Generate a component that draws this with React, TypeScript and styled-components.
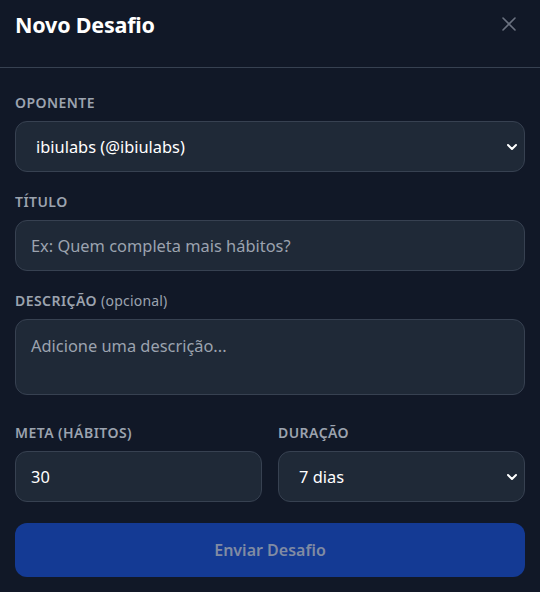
import React from "react";
import styled, { createGlobalStyle } from "styled-components";

const Global = createGlobalStyle`
  html, body { margin: 0; padding: 0; background: #111827; }
  body { font-family: "Noto Sans", "Open Sans", sans-serif; color: #f9fafb; }
  * { box-sizing: border-box; }
`;

const Modal = styled.div`
  width: 540px;
  height: 592px;
  background: #111827;
  display: flex;
  flex-direction: column;
`;

const Header = styled.div`
  height: 68px;
  padding: 0 15px 19px 15px;
  display: flex;
  align-items: center;
  justify-content: space-between;
  border-bottom: 1px solid #374151;
`;

const Title = styled.h2`
  margin: 0;
  font-size: 21.5px;
  font-weight: 700;
  color: #ffffff;
  letter-spacing: -0.2px;
`;

const CloseBtn = styled.button`
  background: none;
  border: none;
  padding: 0;
  margin-right: 6px;
  width: 20px;
  height: 20px;
  display: flex;
  align-items: center;
  justify-content: center;
  color: #6b7280;
  cursor: pointer;
`;

const Body = styled.div`
  padding: 25px 15px 0 15px;
  display: flex;
  flex-direction: column;
  gap: 20px;
`;

const Field = styled.div<{ $extra?: number }>`
  display: flex;
  flex-direction: column;
  gap: 8px;
  min-width: 0;
  margin-bottom: ${(p) => p.$extra ?? 0}px;
`;

const Label = styled.label`
  font-size: 14px;
  font-weight: 600;
  color: #9ca3af;
  line-height: 20px;
  letter-spacing: 0.45px;
  text-transform: uppercase;
`;

const Optional = styled.span`
  font-size: 14px;
  font-weight: 400;
  letter-spacing: 0.2px;
  text-transform: none;
`;

const controlBase = `
  display: block;
  width: 100%;
  background: #1f2937;
  border: 1px solid #374151;
  border-radius: 12px;
  color: #ffffff;
  font-family: "Noto Sans", "Open Sans", sans-serif;
  font-size: 16.4px;
  padding: 0 15px;
  outline: none;
  &::placeholder { color: #9ca3af; }
`;

const Input = styled.input`
  ${controlBase}
  height: 51px;
`;

const TextArea = styled.textarea`
  ${controlBase}
  height: 76px;
  padding: 14px 15px;
  resize: none;
  line-height: 24px;
`;

const SelectWrap = styled.div`
  position: relative;
`;

const Select = styled.select`
  ${controlBase}
  height: 51px;
  padding: 0 20px;
  appearance: none;
`;

const Chevron = styled.svg`
  position: absolute;
  right: 7px;
  top: 50%;
  transform: translateY(-50%);
  pointer-events: none;
`;

const Row = styled.div`
  display: grid;
  grid-template-columns: 1fr 1fr;
  gap: 16px;
`;

const Submit = styled.button`
  margin-top: 1px;
  height: 54px;
  width: 100%;
  border: none;
  border-radius: 12px;
  background: #143a94;
  color: #808ba3;
  font-family: "Noto Sans", "Open Sans", sans-serif;
  font-size: 16px;
  font-weight: 600;
`;

const ChevronIcon = () => (
  <Chevron width="12" height="12" viewBox="0 0 12 12">
    <path d="M2 4 L6 8 L10 4" fill="none" stroke="#ffffff" strokeWidth="2" strokeLinecap="round" strokeLinejoin="round" />
  </Chevron>
);

export default function App() {
  return (
    <>
      <Global />
      <Modal>
        <Header>
          <Title>Novo Desafio</Title>
          <CloseBtn aria-label="Fechar">
            <svg width="16" height="16" viewBox="0 0 16 16">
              <path d="M2 2 L14 14 M14 2 L2 14" stroke="currentColor" strokeWidth="1.6" strokeLinecap="round" />
            </svg>
          </CloseBtn>
        </Header>
        <Body>
          <Field>
            <Label>Oponente</Label>
            <SelectWrap>
              <Select defaultValue="ibiulabs">
                <option value="ibiulabs">ibiulabs (@ibiulabs)</option>
              </Select>
              <ChevronIcon />
            </SelectWrap>
          </Field>
          <Field>
            <Label>Título</Label>
            <Input placeholder="Ex: Quem completa mais hábitos?" />
          </Field>
          <Field $extra={8}>
            <Label>
              Descrição <Optional>(opcional)</Optional>
            </Label>
            <TextArea placeholder="Adicione uma descrição..." />
          </Field>
          <Row>
            <Field>
              <Label>Meta (hábitos)</Label>
              <Input defaultValue="30" />
            </Field>
            <Field>
              <Label>Duração</Label>
              <SelectWrap>
                <Select defaultValue="7">
                  <option value="7">7 dias</option>
                </Select>
                <ChevronIcon />
              </SelectWrap>
            </Field>
          </Row>
          <Submit disabled>Enviar Desafio</Submit>
        </Body>
      </Modal>
    </>
  );
}
